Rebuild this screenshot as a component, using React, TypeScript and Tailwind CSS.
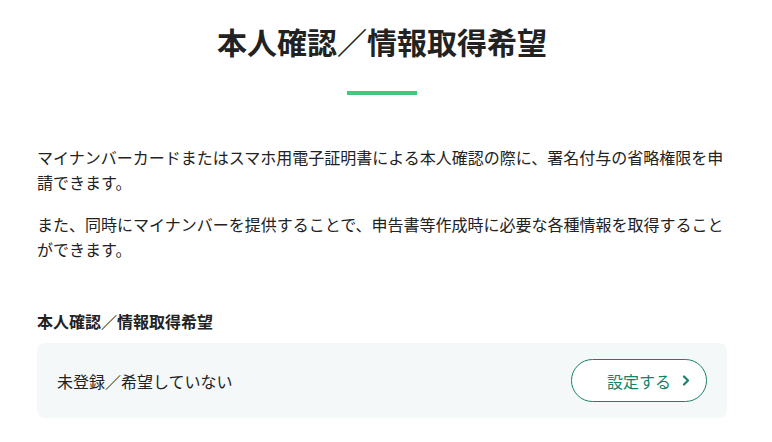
import React from 'react';

const font = { fontFamily: '"Noto Sans CJK JP", "Noto Sans", sans-serif' };

const Chevron: React.FC = () => (
  <svg width="9" height="11" viewBox="0 0 9 11" fill="none">
    <path d="M2 1.5 L6 5.5 L2 9.5" stroke="#1a8068" strokeWidth="2.2" strokeLinecap="round" strokeLinejoin="round" />
  </svg>
);

const App: React.FC = () => {
  return (
    <div className="min-h-[442px] w-[772px] bg-white text-[#222]" style={font}>
      <div className="w-[690px] ml-[37px] pt-[19px]">
        {/* Page title */}
        <h1 className="text-center text-[30px] font-bold leading-[45px]">本人確認／情報取得希望</h1>
        <div className="mx-auto mt-[27px] h-1 w-[70px] bg-[#3ccb7c]"></div>

        {/* Description */}
        <div className="mt-[50px] text-[16px] leading-[25px]">
          <p>マイナンバーカードまたはスマホ用電子証明書による本人確認の際に、署名付与の省略権限を申請できます。</p>
          <p className="mt-[17px]">また、同時にマイナンバーを提供することで、申告書等作成時に必要な各種情報を取得することができます。</p>
        </div>

        {/* Setting row */}
        <h2 className="mt-[47px] text-[16px] font-bold leading-[24px]">本人確認／情報取得希望</h2>
        <div className="mt-[10px] flex h-[75px] items-center justify-between rounded-lg bg-[#f5f8f9] px-5">
          <span className="text-[16px]">未登録／希望していない</span>
          <button className="flex h-[43px] w-[136px] items-center gap-[11px] rounded-full border border-[#1a8068] bg-white pl-[35px] text-[16px] text-[#1a8068]">
            <span>設定する</span>
            <Chevron />
          </button>
        </div>
      </div>
    </div>
  );
};

export default App;
